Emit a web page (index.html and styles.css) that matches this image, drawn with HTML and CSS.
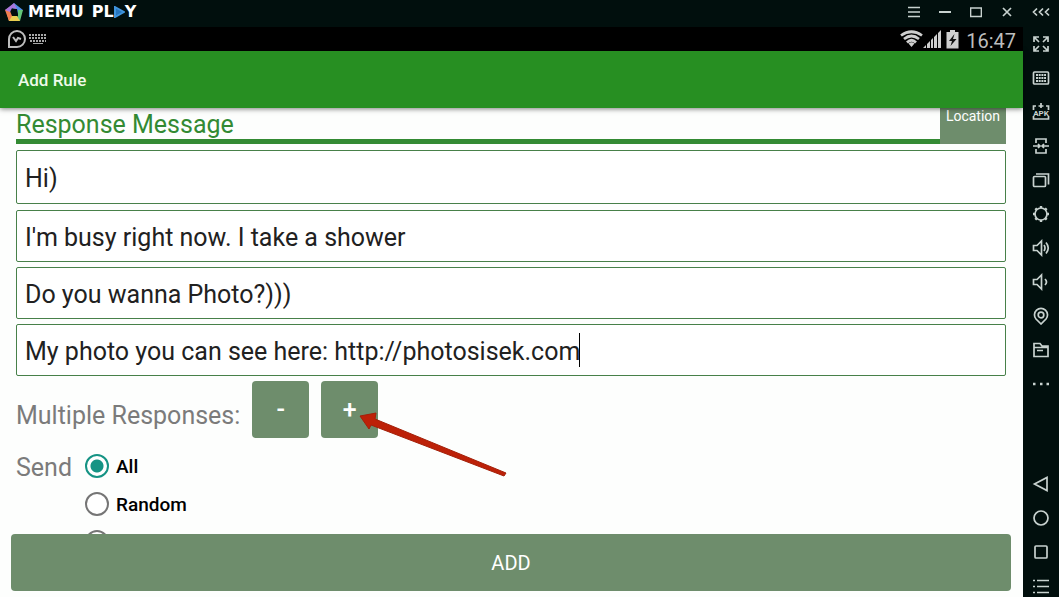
FILE: index.html
```html
<!DOCTYPE html>
<html lang="en">
<head>
  <meta charset="UTF-8">
  <meta name="viewport" content="width=device-width, initial-scale=1.0">
  <title>Add Rule</title>
  <link rel="stylesheet" href="styles.css">
</head>
<body>
  <div class="emulator">
    <div class="window">
      <header class="titlebar">
        <svg class="logo" width="20" height="20" viewBox="0 0 20 20">
          <path d="M10 1L19 8L14 12L13 7L6 6Z" fill="#4f8fe6"/>
          <path d="M19 8L16 19L9 18L14 14L14 8Z" fill="#63c779"/>
          <path d="M16 19L5 19L3 12L7 14L13 14Z" fill="#e9cf50"/>
          <path d="M5 19L1 8L6 5L6 9L8 14Z" fill="#ef7d50"/>
          <path d="M1 8L10 1L13 7L8 6L6 10Z" fill="#a877dc"/>
        </svg>
        <div class="brand">
          <span>MEMU</span>
          <span class="play">PL<svg width="11" height="12" viewBox="0 0 11 12"><path d="M1 1L10 6L1 11Z" fill="#2675bd" stroke="#3f94dc" stroke-width="2"/></svg>Y</span>
        </div>
        <nav class="window-buttons">
          <button aria-label="Menu"><svg width="12" height="12" viewBox="0 0 12 12"><path d="M0 1.5H12M0 6H12M0 10.5H12"/></svg></button>
          <button aria-label="Minimize"><svg width="12" height="12" viewBox="0 0 12 12"><path d="M0 6H12" stroke-width="2"/></svg></button>
          <button aria-label="Maximize"><svg width="12" height="12" viewBox="0 0 12 12"><path d="M.5 2H11.500V10.500H.5Z"/></svg></button>
          <button aria-label="Close"><svg width="12" height="12" viewBox="0 0 12 12"><path d="M2 2L10 10M10 2L2 10"/></svg></button>
        </nav>
      </header>

      <div class="statusbar">
        <svg width="20" height="20" viewBox="0 0 20 20" fill="none" stroke="#bdbdbd" stroke-width="2">
          <path d="M2 18V10A8 8 0 1 1 10 18Z"/>
          <path d="M6 8L9 12L11 9L14 10"/>
        </svg>
        <svg width="18" height="10" viewBox="0 0 18 10" fill="none" stroke="#a8a8a8" stroke-width="2">
          <path d="M0 1H18M0 4H18M1 7H17" stroke-dasharray="2 1"/>
          <path d="M4 9.500H14" stroke-width="1"/>
        </svg>
        <div class="status-icons">
          <svg width="23" height="18" viewBox="0 0 23 18" fill="none" stroke="#cfcfcf" stroke-width="2.700">
            <path d="M1 5.500Q11.500 -2 22 5.500M4 9Q11.500 3 19 9M7 12.500Q11.500 8 16 12.500"/>
            <path d="M8.500 13.500Q11.500 11 14.500 13.500L11.500 17Z" fill="#cfcfcf" stroke="none"/>
          </svg>
          <svg width="18" height="18" viewBox="0 0 18 18" fill="#cfcfcf">
            <path d="M0 18L3 15V18ZM4 14L7 11V18H4ZM8 10L10 8V18H8ZM11 7L14 4V18H11ZM15 3L18 0V18H15Z"/>
          </svg>
          <svg class="battery" width="13" height="19" viewBox="0 0 13 19">
            <path d="M4 0H9V2H12.500V18.500H.5V2H4Z" fill="#cfcfcf"/>
            <path d="M8.500 4L3 11H6L4.500 16L10.500 9H7Z" fill="#111"/>
          </svg>
          <span class="clock">16:47</span>
        </div>
      </div>

      <div class="appbar"><h1>Add Rule</h1></div>

      <main class="screen">
        <form class="rule-form" onsubmit="return false">
          <div class="section-head">
            <h2>Response Message</h2>
            <button type="button" class="location">Location</button>
          </div>

          <div class="field first"><input type="text" aria-label="Response 1" value="Hi)"></div>
          <div class="field"><input type="text" aria-label="Response 2" value="I'm busy right now. I take a shower"></div>
          <div class="field"><input type="text" aria-label="Response 3" value="Do you wanna Photo?)))"></div>
          <div class="field"><input type="text" aria-label="Response 4" value="My photo you can see here: http://photosisek.com"><i class="caret"></i></div>

          <div class="multiple">
            <span class="caption">Multiple Responses:</span>
            <button type="button">-</button>
            <button type="button">+</button>
            <svg class="arrow" width="148" height="66" viewBox="0 0 148 66">
              <path d="M1 5L17 2L16 8L147 62L145 65L12 14L10 18Z" fill="#bd2108" stroke="#a32009"/>
            </svg>
          </div>

          <div class="send">
            <span class="caption">Send</span>
            <div class="options">
              <label><input type="radio" name="send" checked>All</label>
              <label><input type="radio" name="send">Random</label>
              <label><input type="radio" name="send" aria-label="Other"></label>
            </div>
          </div>
        </form>
        <button type="button" class="add">ADD</button>
      </main>
    </div>

    <aside class="toolbar">
      <button class="collapse" aria-label="Collapse"><svg viewBox="0 0 18 18"><path d="M5 5.500L1.500 9L5 12.500M11 5.500L7.500 9L11 12.500M17 5.500L13.500 9L17 12.500"/></svg></button>
      <button aria-label="Full screen"><svg viewBox="0 0 18 18"><path d="M2 7V2H7M2 2L7 7M11 2H16V7M16 2L11 7M2 11V16H7M2 16L7 11M16 11V16H11M16 16L11 11"/></svg></button>
      <button aria-label="Key mapping"><svg viewBox="0 0 18 18"><rect x="1.500" y="3" width="15" height="12" rx="1"/><path d="M4 6H14M4 9H14M4 12H14" stroke-width="2" stroke-dasharray="2 .7"/></svg></button>
      <button aria-label="Install APK"><svg viewBox="0 0 18 18"><path d="M1.500 7V3H4M14 3H16.500V7M9 0V5M6.500 3H11.500M1.500 13V16H16.500V13"/><text x="9" y="13" text-anchor="middle">APK</text></svg></button>
      <button aria-label="Shared folder"><svg viewBox="0 0 18 18"><path d="M4 6V2H14V6M4 12V16H14V12M1 9H8M10 9H17M6 7L8 9L6 11M12 7L10 9L12 11"/></svg></button>
      <button aria-label="Multiple windows"><svg viewBox="0 0 18 18"><rect x="1.500" y="5.500" width="12" height="10" rx="1"/><path d="M4 3H16.500V13.500"/></svg></button>
      <button aria-label="Settings"><svg viewBox="0 0 18 18"><circle cx="9" cy="9" r="6"/><path d="M9 1V3M9 15V17M1 9H3M15 9H17M3.300 3.300L4.700 4.700M13.300 13.300L14.700 14.700M3.300 14.700L4.700 13.300M13.300 4.700L14.700 3.300" stroke-width="2.400"/></svg></button>
      <button aria-label="Volume up"><svg viewBox="0 0 18 18"><path d="M1.500 6.500H5L9.500 2V16L5 11.500H1.500ZM12 6Q14 9 12 12M14 3.500Q18.500 9 14 14.500"/></svg></button>
      <button aria-label="Volume down"><svg viewBox="0 0 18 18"><path d="M1.500 6.500H5L9.500 2V16L5 11.500H1.500ZM13 6Q16 9 13 12"/></svg></button>
      <button aria-label="Location"><svg viewBox="0 0 18 18"><path d="M9 17L4 12A6.500 6.500 0 1 1 14 12Z"/><circle cx="9" cy="8" r="2.800"/></svg></button>
      <button aria-label="Files"><svg viewBox="0 0 18 18"><path d="M2 2.500H8L10 5H16V15.500H2ZM2 6.500H16M5 9.500H11"/></svg></button>
      <button aria-label="More"><svg viewBox="0 0 18 18"><path d="M1 9H3.500M8 9H10.500M14.500 9H17" stroke-width="2.500"/></svg></button>
      <div class="nav-keys">
        <button aria-label="Back"><svg viewBox="0 0 18 18"><path d="M15 2.500V15.500L2.500 9Z"/></svg></button>
        <button aria-label="Home"><svg viewBox="0 0 18 18"><circle cx="9" cy="9" r="7"/></svg></button>
        <button aria-label="Recent"><svg viewBox="0 0 18 18"><rect x="3" y="3" width="12" height="12" rx="1"/></svg></button>
        <button aria-label="List"><svg viewBox="0 0 18 18"><path d="M1 3.500H3M5 3.500H17M1 9.500H3M5 9.500H17M1 15.500H3M5 15.500H17"/></svg></button>
      </div>
    </aside>
  </div>
</body>
</html>
```

FILE: styles.css
```css
* {
  box-sizing: border-box;
}
body {
  margin: 0;
  font-family: Roboto, sans-serif;
  background: #fdfefd;
}
button {
  border: none;
  padding: 0;
  font-family: inherit;
  cursor: pointer;
}
svg {
  flex: none;
}
.emulator {
  display: flex;
  height: 100vh;
  overflow: hidden;
}
.window {
  flex: 1;
  min-width: 0;
  display: flex;
  flex-direction: column;
}

/* emulator title bar */
.titlebar {
  display: flex;
  align-items: center;
  height: 27px;
  flex: none;
  padding: 0 1px 3px 4px;
  background: #010f0d;
}
.brand {
  display: flex;
  align-items: center;
  gap: 8px;
  margin-left: 4px;
  color: #fff;
  font-family: "DejaVu Sans", sans-serif;
  font-weight: bold;
  font-size: 16px;
  line-height: 20px;
}
.play {
  display: flex;
  align-items: center;
}
.window-buttons {
  display: flex;
  margin-left: auto;
}
.window-buttons button {
  width: 31px;
  height: 24px;
  background: none;
}
.window-buttons svg,
.toolbar svg {
  display: block;
  margin: auto;
  fill: none;
  stroke: #c8d2cf;
  stroke-width: 1.7;
}

/* android status bar */
.statusbar {
  display: flex;
  align-items: center;
  gap: 2px;
  height: 24px;
  flex: none;
  padding: 0 7px;
  background: #000;
}
.status-icons {
  display: flex;
  align-items: center;
  margin-left: auto;
}
.battery {
  margin: 0 7px 0 5px;
}
.clock {
  color: #bdbdbd;
  font-size: 20px;
  line-height: 20px;
  padding-top: 4px;
}

.appbar {
  position: relative;
  z-index: 1;
  display: flex;
  align-items: center;
  height: 57px;
  flex: none;
  padding: 0 18px;
  background: #278f22;
  box-shadow: 0 1px 5px rgba(0, 0, 0, 0.5);
}
.appbar h1 {
  margin: 0;
  color: #effbea;
  font-size: 17px;
  font-weight: 500;
}

/* form, scrolled a little under the app bar */
.screen {
  position: relative;
  flex: 1;
  min-height: 0;
  overflow: hidden;
}
.rule-form {
  margin-top: -21px;
  padding: 0 17px 0 16px;
}
.section-head {
  display: flex;
  height: 57px;
  margin-bottom: 6px;
}
.section-head h2 {
  flex: 1;
  display: flex;
  align-items: flex-end;
  margin: 0;
  border-bottom: 5px solid #338a33;
  color: #338a33;
  font-size: 25px;
  font-weight: 400;
  line-height: 28px;
}
.location {
  width: 66px;
  background: #6e8d6c;
  color: #fff;
  font-size: 14px;
}
.field {
  position: relative;
  margin-bottom: 5px;
}
.field input {
  display: block;
  width: 100%;
  height: 52px;
  padding: 2px 8px 0;
  border: 1px solid #478049;
  border-radius: 2px;
  background: #fff;
  color: #212121;
  font-family: inherit;
  font-size: 25px;
  outline: none;
}
.field.first {
  margin-bottom: 6px;
}
.field.first input {
  height: 54px;
}
.caret {
  position: absolute;
  left: 563px;
  top: 9px;
  width: 1px;
  height: 34px;
  background: #000;
}
.caption {
  color: #7b7b7b;
  font-size: 25px;
  line-height: 30px;
}
.multiple {
  position: relative;
  display: flex;
  align-items: center;
  gap: 12px;
}
.multiple .caption {
  padding-top: 12px;
}
.multiple button {
  width: 57px;
  height: 57px;
  border-radius: 4px;
  background: #6e8d6c;
  color: #fff;
  font-size: 25px;
  font-weight: 500;
}
.arrow {
  position: absolute;
  left: 343px;
  top: 30px;
}
.send {
  display: flex;
  gap: 13px;
  margin-top: 9px;
}
.send .caption {
  padding-top: 6px;
}
.options label {
  display: flex;
  align-items: center;
  gap: 7px;
  height: 38px;
  color: #000;
  font-size: 19px;
  font-weight: 500;
}
.options input {
  appearance: none;
  width: 24px;
  height: 24px;
  margin: 0;
  border: 2px solid #757575;
  border-radius: 50%;
  background: #fff;
}
.options input:checked {
  border-color: #159384;
  background: radial-gradient(circle, #159384 6px, #fff 7px);
}
.add {
  position: absolute;
  left: 11px;
  right: 12px;
  bottom: 6px;
  height: 57px;
  border-radius: 4px;
  background: #6e8d6c;
  color: #fff;
  font-size: 20px;
}

/* emulator side toolbar */
.toolbar {
  display: flex;
  flex-direction: column;
  width: 36px;
  flex: none;
  background: #010f0d;
}
.toolbar button {
  display: block;
  width: 36px;
  height: 34px;
  flex: none;
  background: none;
}
.toolbar .collapse {
  height: 27px;
  padding-bottom: 3px;
}
.toolbar svg {
  width: 18px;
  height: 18px;
}
.toolbar text {
  fill: #c8d2cf;
  stroke: none;
  font-size: 8px;
  font-weight: bold;
}
.nav-keys {
  margin-top: auto;
  margin-bottom: -6px;
}
```
